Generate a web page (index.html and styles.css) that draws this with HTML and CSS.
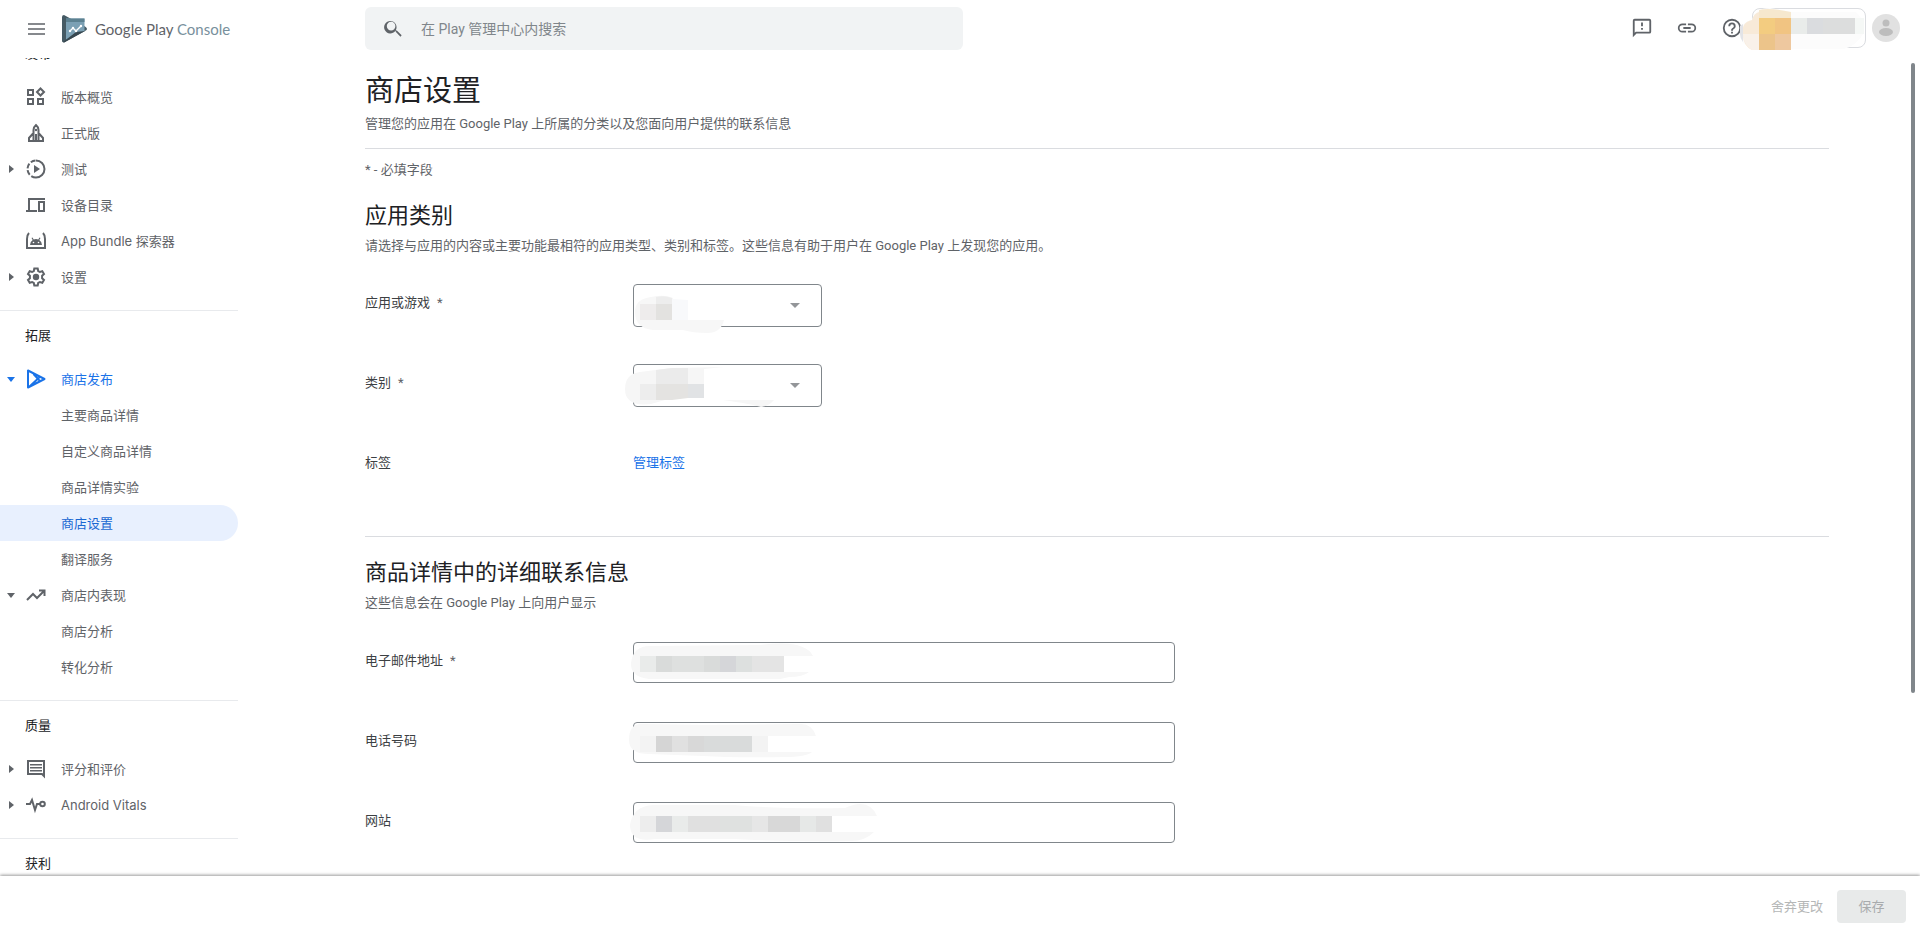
FILE: index.html
```html
<!DOCTYPE html>
<html lang="zh-CN">
  <head>
    <meta charset="UTF-8" />
    <meta name="viewport" content="width=device-width, initial-scale=1.0" />
    <title>商店设置 | Google Play Console</title>
    <link rel="stylesheet" href="styles.css" />
  </head>
  <body>
    <header class="topbar">
      <div class="brand">
        <button class="icon-btn" aria-label="菜单">
          <svg width="17" height="12" viewBox="0 0 17 12"><path d="M0 1h17M0 6h17M0 11h17" stroke="#5f6368" stroke-width="1.6" /></svg>
        </button>
        <a class="logo" href="#">
          <svg width="26" height="28" viewBox="0 0 26 28">
            <path d="M0 2Q0 0 2 0L23 11.500Q27 14 23 16L3 27Q0 28 0 26z" fill="#455a64" />
            <path d="M4 3.500h18.500v12.500L4 25z" fill="#7ba0b4" />
            <path d="M4 3.500h18.500V7H4z" fill="#5c8191" />
            <path d="M1 27L14 17l9-1L3 27Q2 28 1 27z" fill="#37474f" />
            <path d="M8 16l3-3 3 3 5-5" fill="none" stroke="#fff" stroke-width="1.4" />
            <circle cx="8" cy="16" r="1.2" fill="#fff" /><circle cx="11" cy="13" r="1.2" fill="#fff" />
            <circle cx="14" cy="16" r="1.2" fill="#fff" /><circle cx="19" cy="11" r="1.2" fill="#fff" />
          </svg>
          <span>Google Play <span class="logo-sub">Console</span></span>
        </a>
      </div>
      <div class="search">
        <svg width="23" height="23" viewBox="0 0 24 24"><path fill="#5f6368" d="M15.500 14h-.79l-.28-.27A6.500 6.500 0 1 0 14 14.430l.27.280v.79l5 5L20.500 19l-5-5zm-6 0a4.500 4.500 0 1 1 0-9 4.500 4.500 0 0 1 0 9z" /></svg>
        <input type="search" aria-label="搜索" placeholder="在 Play 管理中心内搜索" />
      </div>
      <div class="actions">
        <button class="icon-btn" aria-label="反馈">
          <svg width="22" height="22" viewBox="0 0 24 24" fill="#5f6368"><path d="M20 2H4a2 2 0 0 0-2 2v18l4-4h14a2 2 0 0 0 2-2V4a2 2 0 0 0-2-2zm0 14H5.200L4 17.200V4h16v12zM11 12h2v2h-2zM11 6h2v4h-2z" /></svg>
        </button>
        <button class="icon-btn" aria-label="链接">
          <svg width="22" height="22" viewBox="0 0 24 24" fill="#5f6368"><path d="M3.900 12A3.100 3.100 0 0 1 7 8.900h4V7H7a5 5 0 0 0 0 10h4v-1.900H7A3.100 3.100 0 0 1 3.900 12zM8 13h8v-2H8v2zm9-6h-4v1.900h4a3.100 3.100 0 0 1 0 6.200h-4V17h4a5 5 0 0 0 0-10z" /></svg>
        </button>
        <button class="icon-btn" aria-label="帮助">
          <svg width="22" height="22" viewBox="0 0 24 24" fill="#5f6368"><path d="M11 18h2v-2h-2v2zm1-16a10 10 0 1 0 0 20 10 10 0 0 0 0-20zm0 18a8 8 0 1 1 0-16 8 8 0 0 1 0 16zm0-14a4 4 0 0 0-4 4h2a2 2 0 1 1 4 0c0 2-3 1.750-3 5h2c0-2.250 3-2.500 3-5a4 4 0 0 0-4-4z" /></svg>
        </button>
        <button class="account" aria-label="应用">
          <svg class="mask account-mask" width="126" height="42" viewBox="0 0 126 42">
            <path d="M12 12Q15 0 30 0L52 4H116Q125 12 124 25Q116 38 104 41H12Q0 36 0 26Q0 14 12 12z" fill="#fcfcfc" />
            <path d="M3 26Q1 14 12 12Q14 5 19 4V42H12Q3 38 3 26z" fill="#f8ead8" />
            <path d="M3 26H19V42H12Q4 38 3 26z" fill="#f9f1e9" />
            <path d="M0 18L3 16V34Q0 30 0 26z" fill="#e2e3e7" />
            <path d="M19 2Q28-1 51 4V10H19z" fill="#f6e8ce" />
            <path d="M19 10h16v16H19z" fill="#f3cc80" /><path d="M35 10h16v16H35z" fill="#f1c482" />
            <path d="M19 26h16v16H19z" fill="#ecc48a" /><path d="M35 26h16v16H35z" fill="#eec89f" />
            <path d="M51 10h16v16H51z" fill="#e9ecea" /><path d="M67 10h16v16H67z" fill="#dadcdf" /><path d="M83 10h32v16H83z" fill="#dcdddd" />
            <path d="M115 10h9v16h-9z" fill="#f5f8f6" />
          </svg>
        </button>
        <button class="icon-btn" aria-label="帐号">
          <svg width="28" height="28" viewBox="0 0 28 28"><circle cx="14" cy="14" r="14" fill="#e1e1e1" /><circle cx="14" cy="9" r="3.500" fill="#bdbdbd" /><ellipse cx="14" cy="18" rx="7" ry="4" fill="#bdbdbd" /></svg>
        </button>
      </div>
    </header>

    <div class="layout">
      <nav class="sidebar">
        <div class="nav-scroll">
          <section class="nav-group">
            <h3>发布</h3>
            <a class="nav-item" href="#">
              <svg class="ico" viewBox="0 0 20 20"><path d="M2 3h5v5H2zM2 12h5v5H2zM12 12h5v5h-5zM14.500 1.500l3.500 3.500-3.500 3.500L11 5z" class="line" /></svg>版本概览</a>
            <a class="nav-item" href="#">
              <svg class="ico" viewBox="0 0 20 20"><path d="M7.500 18V7q0-3 2.500-5 2.500 2 2.500 5v11M7.500 10L3 15v3h14v-3l-4.500-5M10 11v7" class="line" stroke-width="1.700" /><circle cx="10" cy="7" r="1.200" /></svg>正式版</a>
            <a class="nav-item" href="#">
              <i class="caret"></i>
              <svg class="ico" viewBox="0 0 20 20"><path d="M10 1.500a8.500 8.500 0 0 1 0 17" class="line" /><path d="M10 18.500a8.500 8.500 0 0 1 0-17" class="line" stroke-dasharray="5 2" /><path d="M8 6l6 4-6 4z" /></svg>测试</a>
            <a class="nav-item" href="#">
              <svg class="ico" viewBox="0 0 20 20"><path d="M19 4H3v12M0 16h11" class="line" /><path d="M13 7h5v9h-5z" class="line" /></svg>设备目录</a>
            <a class="nav-item" href="#">
              <svg class="ico" viewBox="0 0 20 20"><path d="M3 2Q1 4 1 8v9h18V8q0-4-2-6" class="line" stroke-width="1.700" /><path d="M4 14a6 6 0 0 1 2.700-5L5.500 7l1-.5 1.200 2a7 7 0 0 1 4.600 0l1.200-2 1 .5L13.300 9A6 6 0 0 1 16 14z" /><circle cx="7.500" cy="11.500" r=".8" fill="#fff" /><circle cx="12.500" cy="11.500" r=".8" fill="#fff" /></svg>App Bundle 探索器</a>
            <a class="nav-item" href="#">
              <i class="caret"></i>
              <svg class="ico" viewBox="0 0 20 20"><path d="M8.300 1.500h3.400l.5 2.500 1.700 1 2.400-.8L18 7.100l-1.900 1.700v2.400l1.900 1.700-1.700 2.900-2.400-.8-1.700 1-.5 2.500H8.300L7.800 16l-1.700-1-2.400.8L2 12.900l1.900-1.700V8.800L2 7.100l1.700-2.900 2.400.8 1.700-1z" class="line" /><circle cx="10" cy="10" r="3.200" /></svg>设置</a>
          </section>
          <section class="nav-group">
            <h3>拓展</h3>
            <a class="nav-item blue" href="#">
              <i class="caret open"></i>
              <svg class="ico" viewBox="0 0 20 20"><path d="M2 1.500v17L18.500 10zM7.500 5l6.500 7.200M3 18L14 7.800" class="line" stroke-linejoin="round" /></svg>商店发布</a>
            <a class="nav-item" href="#">主要商品详情</a>
            <a class="nav-item" href="#">自定义商品详情</a>
            <a class="nav-item" href="#">商品详情实验</a>
            <a class="nav-item active" href="#">商店设置</a>
            <a class="nav-item" href="#">翻译服务</a>
            <a class="nav-item" href="#">
              <i class="caret open"></i>
              <svg class="ico" viewBox="0 0 20 20"><path d="M1 15l6-6 4 4 7-7M13 5.500h5.500V11" class="line" /></svg>商店内表现</a>
            <a class="nav-item" href="#">商店分析</a>
            <a class="nav-item" href="#">转化分析</a>
          </section>
          <section class="nav-group">
            <h3>质量</h3>
            <a class="nav-item" href="#">
              <i class="caret"></i>
              <svg class="ico" viewBox="0 0 20 20"><path d="M2 2h16v15l-2-2H2z" class="line" /><path d="M4 5h12v1.500H4zM4 8h12v1.500H4zM4 11h12v1.500H4z" /></svg>评分和评价</a>
            <a class="nav-item" href="#">
              <i class="caret"></i>
              <svg class="ico" viewBox="0 0 20 20"><path d="M0 9h4l2-4 3 10 2-6h3" class="line" /><circle cx="16.500" cy="9" r="2.300" class="line" /></svg>Android Vitals</a>
          </section>
          <section class="nav-group">
            <h3>获利</h3>
          </section>
        </div>
      </nav>

      <main class="content">
        <h1>商店设置</h1>
        <p class="desc">管理您的应用在 Google Play 上所属的分类以及您面向用户提供的联系信息</p>
        <hr />
        <p class="required">* - 必填字段</p>

        <section class="block">
          <h2>应用类别</h2>
          <p class="desc">请选择与应用的内容或主要功能最相符的应用类型、类别和标签。这些信息有助于用户在 Google Play 上发现您的应用。</p>
          <div class="field">
            <label for="app-type">应用或游戏<span class="star">*</span></label>
            <div class="control select">
              <select id="app-type"><option></option></select>
              <svg class="mask" width="100" height="52" viewBox="0 0 100 52">
                <path d="M10 29Q10 16 26 14Q40 11 48 15V37H99Q96 50 82 50Q68 50 58 47L28 47Q10 45 10 29z" fill="#f7f7f7" />
                <path d="M31 14q8-2 16 1v6H31z" fill="#ededed" /><path d="M47 16l16 1v20H47z" fill="#f8f9fb" />
                <path d="M15 21h16v16H15z" fill="#eeecec" /><path d="M31 21h16v16H31z" fill="#e3e2e0" />
              </svg>
            </div>
          </div>
          <div class="field">
            <label for="category">类别<span class="star">*</span></label>
            <div class="control select">
              <select id="category"><option></option></select>
              <svg class="mask" width="160" height="52" viewBox="0 0 160 52">
                <path d="M0 26Q0 11 15 9L46 5L99 4L79 6V35H47L26 41Q0 44 0 26zM98 37H149Q144 43 136 44Q126 41 98 37z" fill="#f6f6f6" />
                <path d="M31 7l16-2h16v16H31z" fill="#ebebeb" /><path d="M15 21h16v16H15z" fill="#ededed" />
                <path d="M31 21h32v14l-16 2H31z" fill="#e4e3e1" /><path d="M63 21h16v14H63z" fill="#e1e3e5" />
              </svg>
            </div>
          </div>
          <div class="field">
            <span class="label">标签</span>
            <a class="link" href="#">管理标签</a>
          </div>
        </section>

        <hr />

        <section class="block">
          <h2>商品详情中的详细联系信息</h2>
          <p class="desc">这些信息会在 Google Play 上向用户显示</p>
          <div class="field">
            <label for="email">电子邮件地址<span class="star">*</span></label>
            <div class="control text">
              <input type="email" id="email" />
              <svg class="mask" width="200" height="44" viewBox="0 0 200 44">
                <path d="M6 22Q8 5 25 5L135 4Q180-2 188 15H159V31H184Q178 36 164 36L155 38H24Q5 36 6 22z" fill="#f7f7f7" />
                <path d="M15 15h16v16H15z" fill="#e9ebea" /><path d="M31 15h16v16H31z" fill="#d9dbda" /><path d="M47 15h32v16H47z" fill="#dee0df" />
                <path d="M79 15h16v16H79z" fill="#d9dbda" /><path d="M95 15h16v16H95z" fill="#d5d6d9" /><path d="M111 15h16v16h-16z" fill="#dde0df" /><path d="M127 15h32v16h-32z" fill="#e4e4e4" />
              </svg>
            </div>
          </div>
          <div class="field">
            <label for="phone">电话号码</label>
            <div class="control text">
              <input type="tel" id="phone" />
              <svg class="mask" width="200" height="44" viewBox="0 0 200 44">
                <path d="M4 19Q4 3 16 3L80 4L176 3Q187 3 191 15H143V31H187Q181 36 160 36Q110 37 78 35L24 33Q4 33 4 19z" fill="#f7f7f7" />
                <path d="M15 15h16v16H15z" fill="#f3f3f3" /><path d="M31 15h16v16H31z" fill="#d5d5d5" /><path d="M47 15h16v16H47z" fill="#e0e0e0" />
                <path d="M63 15h16v16H63z" fill="#d8d8d8" /><path d="M79 15h48v16H79z" fill="#d9dbdb" /><path d="M127 15h16v16h-16z" fill="#f3f3f3" />
              </svg>
            </div>
          </div>
          <div class="field">
            <label for="website">网站</label>
            <div class="control text">
              <input type="url" id="website" />
              <svg class="mask" width="260" height="44" viewBox="0 0 260 44">
                <path d="M5 24Q8 5 28 4H110Q150 8 220 7Q244-4 252 15H207V31H249Q240 40 226 40Q170 41 110 38H30Q5 42 5 24z" fill="#f7f7f7" />
                <path d="M15 15h16v16H15z" fill="#ededed" /><path d="M31 15h16v16H31z" fill="#d5d6d9" /><path d="M47 15h16v16H47z" fill="#e9ebea" />
                <path d="M63 15h32v16H63z" fill="#e0e0e0" /><path d="M95 15h32v16H95z" fill="#dfe1e0" /><path d="M127 15h16v16h-16z" fill="#e6e6e6" />
                <path d="M143 15h32v16h-32z" fill="#d8d8d8" /><path d="M175 15h16v16h-16z" fill="#e6e8e7" /><path d="M191 15h16v16h-16z" fill="#e0e0e0" />
              </svg>
            </div>
          </div>
        </section>
        <div class="scroll-thumb"></div>
      </main>
    </div>

    <footer class="bottombar">
      <button class="discard" disabled>舍弃更改</button>
      <button class="save" disabled>保存</button>
    </footer>
  </body>
</html>
```
FILE: styles.css
```css
* {
  box-sizing: border-box;
}
body {
  margin: 0;
  height: 100vh;
  display: flex;
  flex-direction: column;
  overflow: hidden;
  background-color: #fff;
  color: #3c4043;
  font-family: Roboto, "Noto Sans CJK SC", sans-serif;
  font-size: 13px;
  line-height: 20px;
}
h1,
h2,
h3,
p {
  margin: 0;
  font-weight: 400;
}
a {
  color: inherit;
  text-decoration: none;
}
button {
  font: inherit;
  border: none;
  background: none;
  padding: 0;
}
svg {
  display: block;
}

/* top bar */
.topbar {
  display: flex;
  align-items: flex-start;
  height: 58px;
  flex-shrink: 0;
  padding: 7px 20px 0 28px;
}
.brand {
  display: flex;
  align-items: center;
  gap: 17px;
  width: 337px;
  height: 43px;
}
.logo {
  display: flex;
  align-items: center;
  gap: 7px;
  font-family: Lato, sans-serif;
  font-size: 15px;
  color: #5f6368;
}
.logo-sub {
  color: #78909c;
}
.search {
  display: flex;
  align-items: center;
  gap: 14px;
  width: 598px;
  height: 43px;
  padding: 0 17px;
  border-radius: 6px;
  background-color: #f1f3f4;
}
.search input {
  flex: 1;
  border: none;
  outline: none;
  background: none;
  font: inherit;
  font-size: 14px;
}
.search input::placeholder {
  color: #80868b;
}
.actions {
  display: flex;
  align-items: center;
  gap: 23px;
  margin-left: auto;
  height: 42px;
}
.account {
  position: relative;
  width: 114px;
  height: 40px;
  margin: 0 -17px 0 -14px;
  border: 1px solid #dadce0;
  border-radius: 8px;
}

/* sidebar */
.layout {
  display: flex;
  flex: 1;
  min-height: 0;
}
.sidebar {
  width: 238px;
  flex-shrink: 0;
  overflow: hidden;
}
.nav-scroll {
  margin-top: -29px;
}
.nav-group {
  padding-bottom: 15px;
  border-bottom: 1px solid #e8eaed;
}
.nav-group h3 {
  padding-left: 25px;
  font-size: 13px;
  line-height: 50px;
  color: #202124;
}
.nav-item {
  position: relative;
  display: flex;
  align-items: center;
  height: 36px;
  padding-left: 61px;
  border-radius: 0 18px 18px 0;
  font-family: Inter, "Noto Sans CJK SC", sans-serif;
  color: #5f6368;
}
.nav-item.blue {
  color: #1a73e8;
}
.nav-item.active {
  background-color: #e8f0fe;
  color: #1967d2;
}
.ico {
  width: 20px;
  height: 20px;
  margin: 0 15px 0 -35px;
  fill: currentColor;
}
.line {
  fill: none;
  stroke: currentColor;
  stroke-width: 2;
}
.caret {
  position: absolute;
  left: 9px;
  border: 4px solid transparent;
  border-left: 5px solid currentColor;
  border-right: none;
}
.caret.open {
  left: 7px;
  border: 4px solid transparent;
  border-top: 5px solid currentColor;
  border-bottom: none;
}

/* main content */
.content {
  position: relative;
  flex: 1;
  padding: 11px 91px 0 127px;
  overflow: hidden;
}
h1 {
  font-size: 29px;
  line-height: 44px;
  color: #202124;
}
h2 {
  font-size: 22px;
  line-height: 32px;
  color: #202124;
}
.desc,
.required {
  color: #5f6368;
}
h1 + .desc {
  margin-top: 1px;
}
h2 + .desc {
  margin-top: 4px;
}
hr {
  margin: 14px 0 0;
  border: none;
  border-top: 1px solid #dadce0;
}
.required {
  margin-top: 11px;
}
.block {
  padding-top: 20px;
}
.block + hr {
  margin-top: 12px;
}
.field {
  display: grid;
  grid-template-columns: 268px 1fr;
  height: 80px;
}
.desc + .field {
  margin-top: 28px;
}
hr + .block .desc + .field {
  margin-top: 29px;
}
.field label,
.field .label,
.link {
  padding-top: 9px;
}
.star {
  margin-left: 7px;
  color: #5f6368;
}
.link {
  justify-self: start;
  color: #1a73e8;
}
.control {
  position: relative;
  justify-self: start;
}
.control select,
.control input {
  display: block;
  width: 100%;
  padding: 0 12px;
  border: 1px solid #80868b;
  border-radius: 4px;
  background-color: #fff;
  font: inherit;
}
.select {
  width: 189px;
}
.select select {
  height: 43px;
  appearance: none;
}
.select::after {
  content: "";
  position: absolute;
  top: 19px;
  right: 22px;
  border: 5px solid transparent;
  border-top-color: #939699;
  border-bottom: none;
}
.text {
  width: 542px;
  max-width: 100%;
}
.text input {
  height: 41px;
}

/* redacted values drawn over the controls */
.mask {
  position: absolute;
  top: -1px;
  left: -8px;
  pointer-events: none;
}
.account-mask {
  left: -13px;
}
.scroll-thumb {
  position: absolute;
  top: 5px;
  right: 5px;
  width: 4px;
  height: 77%;
  border-radius: 2px;
  background-color: #80868b;
}

/* bottom bar */
.bottombar {
  position: relative;
  display: flex;
  justify-content: flex-end;
  align-items: center;
  gap: 14px;
  height: 61px;
  flex-shrink: 0;
  padding: 0 14px;
  background-color: #fff;
  box-shadow: 0 -1px 3px rgba(0, 0, 0, 0.4);
}
.discard {
  color: #b5b7b7;
}
.save {
  width: 69px;
  height: 33px;
  border-radius: 4px;
  background-color: #e8eaea;
  color: #a8abad;
}
```
